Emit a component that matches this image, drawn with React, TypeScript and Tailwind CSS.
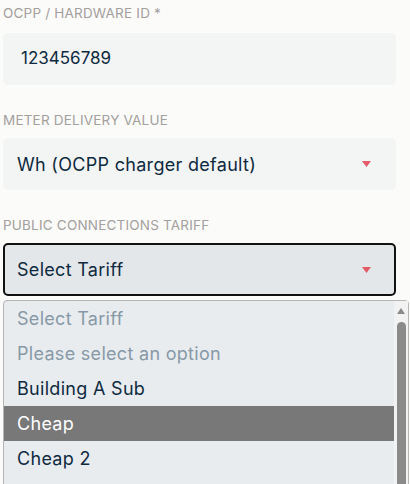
const font = { fontFamily: "Inter, 'Noto Sans', sans-serif" };

function Caret() {
  return (
    <svg width="9" height="6" viewBox="0 0 9 6" className="shrink-0">
      <path d="M0 0 H9 L4.5 6 Z" fill="#e25b66" />
    </svg>
  );
}

function Label({ children, gap }: { children: React.ReactNode; gap: string }) {
  return (
    <div className={`text-[13.5px] leading-5 uppercase text-[#a3a09d] tracking-[0.2px] ${gap}`}>
      {children}
    </div>
  );
}

const options = [
  { label: "Select Tariff", muted: true },
  { label: "Please select an option", muted: true },
  { label: "Building A Sub" },
  { label: "Cheap", active: true },
  { label: "Cheap 2" },
];

export default function App() {
  return (
    <div
      className="w-[410px] h-[484px] overflow-hidden bg-[#fbfbfa] text-[#0e2a40]"
      style={font}
    >
      <div className="pl-[3px] pr-[14px] pt-[3px]">
        <Label gap="mb-[10px]">OCPP / Hardware ID *</Label>
        <div className="h-[52px] rounded-[5px] bg-[#f3f4f4] flex items-center pl-[18px] text-[17px]">
          123456789
        </div>

        <div className="mt-[25px]">
          <Label gap="mb-2">Meter Delivery Value</Label>
        </div>
        <div className="h-[52px] rounded-[5px] bg-[#f3f4f4] flex items-center justify-between pl-[14px] pr-[25px] text-[18px] tracking-[0.3px]">
          <span>Wh (OCPP charger default)</span>
          <Caret />
        </div>

        <div className="mt-[25px]">
          <Label gap="mb-2">Public Connections Tariff</Label>
        </div>
        <div className="h-[53px] rounded-[5px] border-2 border-[#111] bg-[#e4e7e9] flex items-center justify-between pl-[12px] pr-[23px] text-[18px] tracking-[0.3px]">
          <span>Select Tariff</span>
          <Caret />
        </div>
      </div>

      <div className="mt-[4px] ml-[3px] w-[406px] h-[200px] border border-[#b5b5b5] rounded-t-[4px] bg-[#e9ecef] flex">
        <div className="flex-1 flex flex-col">
          {options.map((o) => (
            <div
              key={o.label}
              className={`h-[35px] shrink-0 flex items-center pl-[13px] text-[18px] tracking-[0.3px] ${
                o.active
                  ? "bg-[#787878] text-white"
                  : o.muted
                    ? "text-[#8799a6]"
                    : "text-[#0e2a40]"
              }`}
            >
              {o.label}
            </div>
          ))}
        </div>
        <div className="w-[14px] bg-[#f2f2f2] flex flex-col items-center pt-[7px]">
          <svg width="8" height="6" viewBox="0 0 8 6">
            <path d="M0 6 L4 0 L8 6 Z" fill="#8a8a8a" />
          </svg>
          <div className="mt-[8px] w-[9px] flex-1 rounded-t-full bg-[#8a8a8a]" />
        </div>
      </div>
    </div>
  );
}
